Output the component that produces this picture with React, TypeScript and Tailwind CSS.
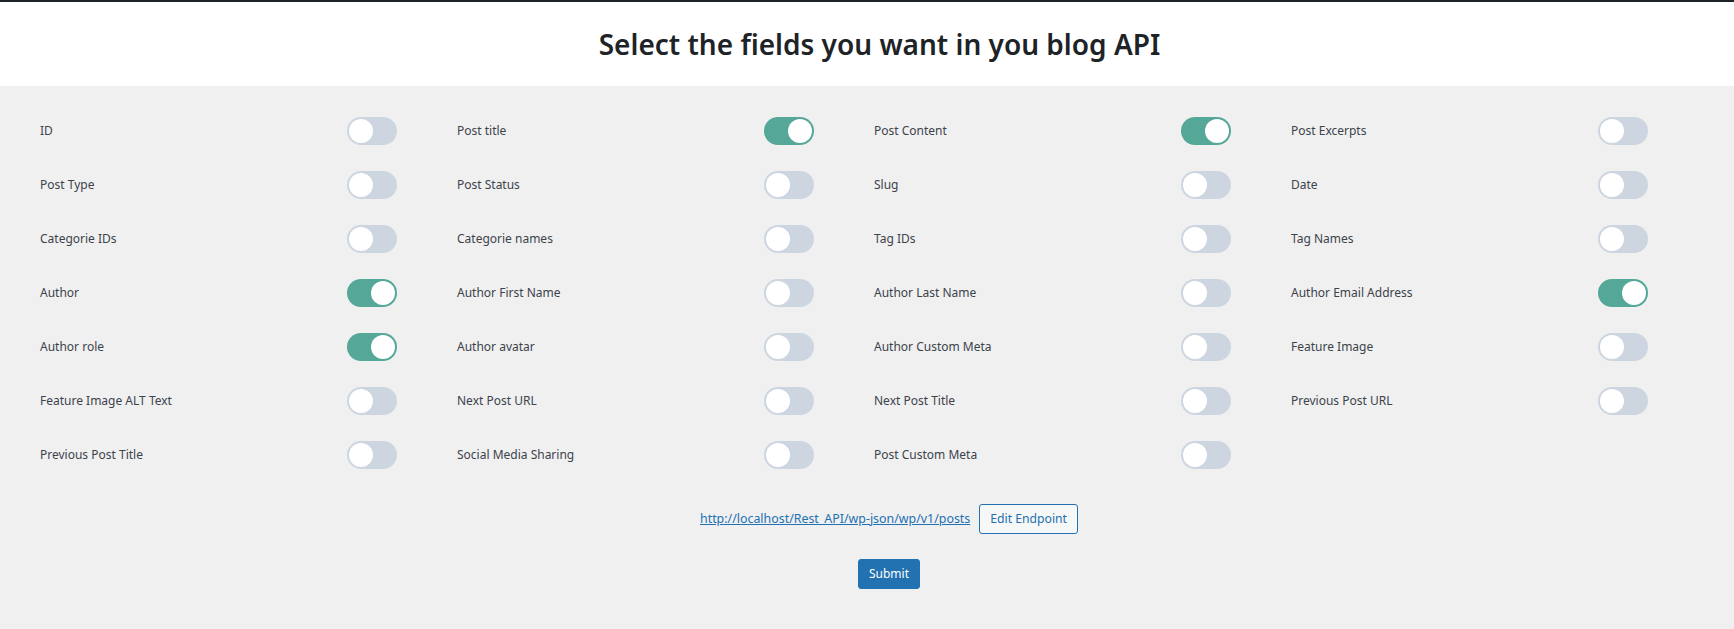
import React from "react";

const fields: [string, boolean][] = [
  ["ID", false], ["Post title", true], ["Post Content", true], ["Post Excerpts", false],
  ["Post Type", false], ["Post Status", false], ["Slug", false], ["Date", false],
  ["Categorie IDs", false], ["Categorie names", false], ["Tag IDs", false], ["Tag Names", false],
  ["Author", true], ["Author First Name", false], ["Author Last Name", false], ["Author Email Address", true],
  ["Author role", true], ["Author avatar", false], ["Author Custom Meta", false], ["Feature Image", false],
  ["Feature Image ALT Text", false], ["Next Post URL", false], ["Next Post Title", false], ["Previous Post URL", false],
  ["Previous Post Title", false], ["Social Media Sharing", false], ["Post Custom Meta", false],
];

function Toggle({ on }: { on: boolean }) {
  return (
    <div
      className={
        "flex h-[28px] w-[50px] items-center rounded-full p-[2px] " +
        (on ? "justify-end bg-[#55a797]" : "justify-start bg-[#cdd6e0]")
      }
    >
      <div className="h-[24px] w-[24px] rounded-full bg-white" />
    </div>
  );
}

export default function App() {
  return (
    <div
      className="min-h-[629px] bg-[#f0f0f1] text-[#3c434a]"
      style={{ fontFamily: '"Noto Sans", "Open Sans", sans-serif' }}
    >
      <div className="border-t-2 border-[#1d2327] bg-white">
        <div className="flex h-[84px] items-center justify-center pl-[25px]">
          <h1 className="text-[28px] font-semibold text-[#1d2327]">
            Select the fields you want in you blog API
          </h1>
        </div>
      </div>
      <div className="pt-[18px] pl-[40px]">
        <div className="grid grid-cols-[repeat(4,417px)]">
          {fields.map(([label, on]) => (
            <div key={label} className="flex h-[54px] items-center justify-between pr-[60px]">
              <span className="text-[12px]">{label}</span>
              <Toggle on={on} />
            </div>
          ))}
        </div>
      </div>
      <div className="mt-[22px] flex items-center justify-center gap-[9px] pl-[44px]">
        <a href="#" className="text-[12.4px] text-[#2271b1] underline">
          http://localhost/Rest_API/wp-json/wp/v1/posts
        </a>
        <button className="h-[30px] rounded-[3px] border border-[#2271b1] bg-[#f6f7f7] px-[10px] text-[12.2px] text-[#2271b1]">
          Edit Endpoint
        </button>
      </div>
      <div className="mt-[25px] flex justify-center pl-[44px]">
        <button className="h-[30px] rounded-[3px] border border-[#2271b1] bg-[#2271b1] px-[10px] text-[12px] text-white">
          Submit
        </button>
      </div>
    </div>
  );
}
